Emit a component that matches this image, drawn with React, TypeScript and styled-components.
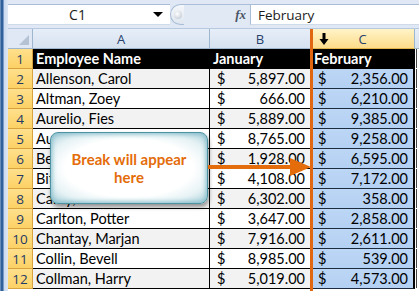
import React from 'react';
import styled, { createGlobalStyle, css } from 'styled-components';

const GlobalStyle = createGlobalStyle`
  html, body {
    margin: 0;
    padding: 0;
    overflow: hidden;
    background: #ffffff;
  }
  body {
    font-family: Lato, "Liberation Sans", sans-serif;
  }
`;

const rows = [
  { name: 'Allenson, Carol', jan: '5,897.00', feb: '2,356.00' },
  { name: 'Altman, Zoey', jan: '666.00', feb: '6,210.00' },
  { name: 'Aurelio, Fies', jan: '5,889.00', feb: '9,385.00' },
  { name: 'Austin, Vern', jan: '8,765.00', feb: '9,258.00' },
  { name: 'Bennet, Jill', jan: '1,928.00', feb: '6,595.00' },
  { name: 'Bitton, Lee', jan: '4,108.00', feb: '7,172.00' },
  { name: 'Carey, Grant', jan: '6,302.00', feb: '358.00' },
  { name: 'Carlton, Potter', jan: '3,647.00', feb: '2,858.00' },
  { name: 'Chantay, Marjan', jan: '7,916.00', feb: '2,611.00' },
  { name: 'Collin, Bevell', jan: '8,985.00', feb: '539.00' },
  { name: 'Collman, Harry', jan: '5,019.00', feb: '4,573.00' },
];

const Window = styled.div`
  display: flex;
  width: 419px;
  height: 291px;
  overflow: hidden;
  position: relative;
`;

const SideStrip = styled.div`
  width: 8px;
  flex-shrink: 0;
  background: linear-gradient(to right, #9fb8d8 0, #2f609c 1px, #2f609c 3px, #c9d9ee 4px, #dfe8f4 8px);
`;

const Main = styled.div`
  flex: 1;
  display: flex;
  flex-direction: column;
  min-width: 0;
`;

const FormulaBar = styled.div`
  height: 29px;
  box-sizing: border-box;
  display: flex;
  align-items: flex-start;
  padding-top: 4px;
  background: #dfe8f4;
  border-bottom: 1px solid #b7c9df;
`;

const NameBox = styled.div`
  width: 162px;
  height: 21px;
  box-sizing: border-box;
  background: #fff;
  border-top: 1px solid #a9bdd6;
  border-bottom: 1px solid #d0dbe9;
  display: flex;
  align-items: center;
  font-family: "Open Sans", "Liberation Sans", sans-serif;
  font-size: 14px;
  color: #1c1c1c;
`;

const NameText = styled.span`
  flex: 1;
  text-align: center;
  padding-right: 6px;
`;

const DropArrow = styled.span`
  width: 0;
  height: 0;
  margin-right: 7px;
  border-left: 5px solid transparent;
  border-right: 5px solid transparent;
  border-top: 5px solid #000;
`;

const Knob = styled.div`
  width: 14px;
  height: 21px;
  box-sizing: border-box;
  border-radius: 11px 0 0 11px;
  background: linear-gradient(to bottom, #f4f7fb, #dfe6ef);
  border: 1px solid #a9bdd6;
  border-right: none;
  display: flex;
  align-items: center;
  padding-left: 3px;
  &::after {
    content: '';
    width: 8px;
    height: 8px;
    border-radius: 50%;
    background: radial-gradient(circle at 40% 35%, #ffffff, #b8c2ce);
  }
`;

const FxZone = styled.div`
  width: 66px;
  height: 21px;
  box-sizing: border-box;
  border-top: 1px solid #a9bdd6;
  background: #e1e9f4;
  display: flex;
  align-items: center;
  justify-content: flex-end;
  padding-right: 4px;
  font-family: "Liberation Serif", serif;
  font-style: italic;
  font-weight: bold;
  font-size: 13px;
  color: #4a5566;
`;

const FormulaInput = styled.div`
  flex: 1;
  height: 21px;
  box-sizing: border-box;
  background: #fff;
  border-top: 1px solid #a9bdd6;
  border-left: 1px solid #a9bdd6;
  border-bottom: 1px solid #d0dbe9;
  display: flex;
  align-items: center;
  padding-left: 7px;
  font-family: "Open Sans", "Liberation Sans", sans-serif;
  font-size: 13.5px;
  color: #1c1c1c;
`;

const Grid = styled.div`
  display: grid;
  grid-template-columns: 25px 177px 101px 104px 1fr;
  grid-auto-rows: 20px;
`;

const Corner = styled.div`
  background: #dfe8f4;
  border-right: 1px solid #9eb6ce;
  border-bottom: 1px solid #9eb6ce;
  position: relative;
  &::after {
    content: '';
    position: absolute;
    right: 3px;
    bottom: 3px;
    border-left: 10px solid transparent;
    border-bottom: 10px solid #b4c2d3;
  }
`;

const ColHead = styled.div<{ $active?: boolean }>`
  box-sizing: border-box;
  display: flex;
  align-items: center;
  justify-content: center;
  position: relative;
  font-family: "Open Sans", "Liberation Sans", sans-serif;
  font-size: 13px;
  color: #27416b;
  border-right: 1px solid #9eb6ce;
  border-bottom: 1px solid #9eb6ce;
  background: linear-gradient(to bottom, #e6eef8, #d7e2f0);
  ${(p) =>
    p.$active &&
    css`
      background: linear-gradient(to bottom, #fff4c8, #fddb8a);
      border-bottom-color: #e1b44e;
    `}
`;

const ColCursor = styled.svg`
  position: absolute;
  left: 8px;
  top: 4px;
`;

const RowHead = styled.div`
  box-sizing: border-box;
  display: flex;
  align-items: center;
  justify-content: center;
  font-family: "Open Sans", "Liberation Sans", sans-serif;
  font-size: 13.5px;
  color: #1f3a64;
  background: linear-gradient(to bottom, #ffe08c, #fcd165);
  border-right: 1px solid #d8a23e;
  border-bottom: 1px solid #d8a23e;
`;

type Tone = 'title' | 'shade' | 'plain';

const Cell = styled.div<{ $tone: Tone; $picked?: boolean }>`
  box-sizing: border-box;
  display: flex;
  align-items: center;
  padding: 0 5px 0 3px;
  font-size: 14.5px;
  white-space: nowrap;
  overflow: hidden;
  color: #000;
  border-bottom: 1px solid #000;
  border-right: 1px solid #000;
  background: ${(p) => (p.$tone === 'title' ? '#000' : p.$tone === 'shade' ? '#f2f2f2' : '#fff')};
  ${(p) => p.$tone === 'title' && css`color: #fff; font-weight: bold;`}
  ${(p) =>
    p.$picked &&
    p.$tone !== 'title' &&
    css`
      background: linear-gradient(to bottom, #bcd6f5, #b4d0f2);
      border-bottom-color: #1d2b3e;
    `}
  ${(p) => p.$picked && css`border-right: 2px solid #000;`}
`;

const Money = styled.span`
  flex: 1;
  display: flex;
  justify-content: space-between;
  padding-left: 4px;
`;

const Spare = styled.div<{ $head?: boolean }>`
  box-sizing: border-box;
  background: ${(p) => (p.$head ? 'linear-gradient(to bottom, #e6eef8, #d7e2f0)' : '#fff')};
  border-bottom: 1px solid ${(p) => (p.$head ? '#9eb6ce' : '#fff')};
  ${(p) => !p.$head && css`box-shadow: inset 1px 0 0 #fff, inset 2px 0 0 #444;`}
`;

const PageBreak = styled.div`
  position: absolute;
  left: 310px;
  top: 29px;
  bottom: 0;
  width: 3px;
  background: #e0670f;
`;

const Callout = styled.div`
  position: absolute;
  left: 50px;
  top: 132px;
  width: 158px;
  height: 72px;
  box-sizing: border-box;
  border-radius: 8px;
  border: 1px solid #4e93a3;
  background: radial-gradient(ellipse at center, #ffffff 58%, #e6f2f5 78%, #a9d0da 100%);
  box-shadow: 1px 3px 4px rgba(0, 0, 0, 0.4), inset 0 0 5px 1px #7fb9c7;
  display: flex;
  align-items: center;
  justify-content: center;
  text-align: center;
  font-weight: bold;
  font-size: 15px;
  line-height: 18px;
  color: #e46c0a;
`;

const Arrow = styled.svg`
  position: absolute;
  left: 208px;
  top: 156px;
`;

export default function App() {
  return (
    <Window>
      <GlobalStyle />
      <SideStrip />
      <Main>
        <FormulaBar>
          <NameBox>
            <NameText>C1</NameText>
            <DropArrow />
          </NameBox>
          <Knob />
          <FxZone>fx</FxZone>
          <FormulaInput>February</FormulaInput>
        </FormulaBar>
        <Grid>
          <Corner />
          <ColHead>A</ColHead>
          <ColHead>B</ColHead>
          <ColHead $active>
            <ColCursor width="10" height="12" viewBox="0 0 10 12">
              <path d="M3.5 0h3v6h3l-4.5 6L0.5 6h3z" fill="#000" />
            </ColCursor>
            C
          </ColHead>
          <Spare $head />

          <RowHead>1</RowHead>
          <Cell $tone="title">Employee Name</Cell>
          <Cell $tone="title">January</Cell>
          <Cell $tone="title" $picked>February</Cell>
          <Spare />

          {rows.map((r, i) => {
            const tone: Tone = i % 2 === 0 ? 'shade' : 'plain';
            return (
              <React.Fragment key={r.name}>
                <RowHead>{i + 2}</RowHead>
                <Cell $tone={tone}>{r.name}</Cell>
                <Cell $tone={tone}>
                  <Money>
                    <span>$</span>
                    <span>{r.jan}</span>
                  </Money>
                </Cell>
                <Cell $tone={tone} $picked>
                  <Money>
                    <span>$</span>
                    <span>{r.feb}</span>
                  </Money>
                </Cell>
                <Spare />
              </React.Fragment>
            );
          })}
        </Grid>
      </Main>
      <PageBreak />
      <Callout>
        Break will appear
        <br />
        here
      </Callout>
      <Arrow width="104" height="22" viewBox="0 0 104 22">
        <rect x="0" y="9" width="84" height="4" fill="#e46c0a" />
        <path d="M82 2 L103 11 L82 20 Z" fill="#e46c0a" />
      </Arrow>
    </Window>
  );
}
